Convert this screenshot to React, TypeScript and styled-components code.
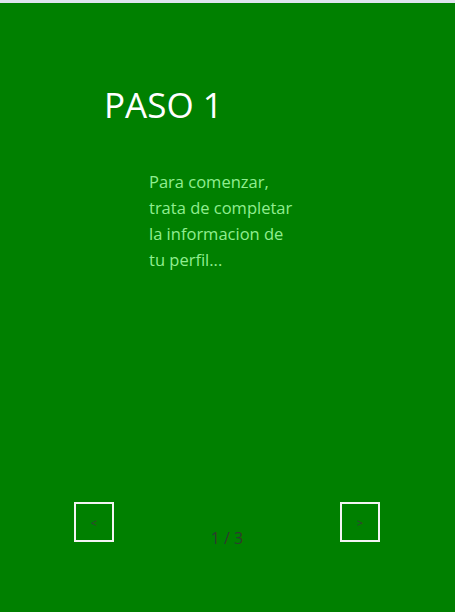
import styled, { createGlobalStyle } from 'styled-components';

const GlobalStyle = createGlobalStyle`
  html, body {
    margin: 0;
    padding: 0;
    height: 100%;
  }
  body {
    font-family: "Open Sans", "Noto Sans", sans-serif;
  }
  #root {
    height: 100%;
  }
`;

const Page = styled.div`
  display: flex;
  flex-direction: column;
  height: 612px;
  overflow: hidden;
`;

const TopStrip = styled.div`
  height: 3px;
  background: #dfe5ee;
`;

const Panel = styled.div`
  flex: 1;
  display: flex;
  flex-direction: column;
  background: #008000;
`;

const Title = styled.h1`
  margin: 79px 0 0 104px;
  font-size: 35px;
  font-weight: 400;
  line-height: 46px;
  color: #ffffff;
`;

const Intro = styled.p`
  margin: 41px 0 0 149px;
  width: 152px;
  font-size: 16.5px;
  line-height: 26px;
  color: #90ee90;
`;

const Footer = styled.div`
  margin-top: auto;
  margin-bottom: 63px;
  display: flex;
  justify-content: space-between;
  align-items: flex-start;
  padding: 0 75px 0 74px;
`;

const NavButton = styled.button`
  width: 40px;
  height: 40px;
  box-sizing: border-box;
  border: 2px solid #f4f4f4;
  background: transparent;
  color: #3a3a3a;
  font-family: "Open Sans", sans-serif;
  font-size: 11px;
  padding: 0;
  cursor: pointer;
`;

const Counter = styled.span`
  margin-top: 25px;
  font-size: 16px;
  line-height: 22px;
  color: #2f3a2f;
`;

export default function App() {
  return (
    <>
      <GlobalStyle />
      <Page>
        <TopStrip />
        <Panel>
          <Title>PASO 1</Title>
          <Intro>Para comenzar, trata de completar la informacion de tu perfil...</Intro>
          <Footer>
            <NavButton>&lt;</NavButton>
            <Counter>1 / 3</Counter>
            <NavButton>&gt;</NavButton>
          </Footer>
        </Panel>
      </Page>
    </>
  );
}
